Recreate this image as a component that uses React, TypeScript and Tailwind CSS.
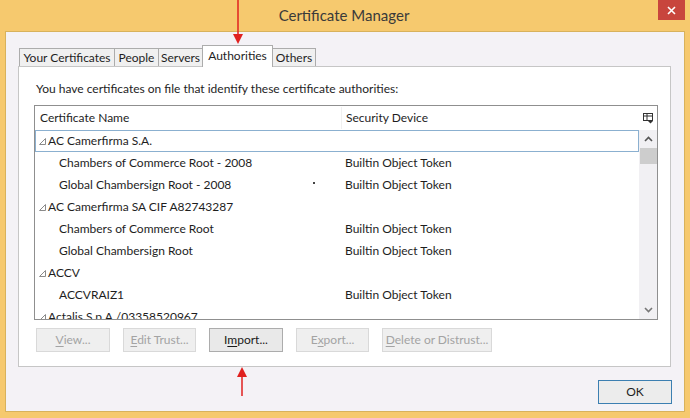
import React from "react";

const font = { fontFamily: 'Lato, "Noto Sans", sans-serif' };

function Tri() {
  return (
    <svg width="7" height="7" viewBox="0 0 7 7" className="mr-[2px] shrink-0">
      <path d="M6.5 0.5 L6.5 6.5 L0.5 6.5 Z" fill="none" stroke="#8a8a8a" strokeWidth="1" />
    </svg>
  );
}

type Row = { name: string; device?: string; group?: boolean; focus?: boolean };

const rows: Row[] = [
  { name: "AC Camerfirma S.A.", group: true, focus: true },
  { name: "Chambers of Commerce Root - 2008", device: "Builtin Object Token" },
  { name: "Global Chambersign Root - 2008", device: "Builtin Object Token" },
  { name: "AC Camerfirma SA CIF A82743287", group: true },
  { name: "Chambers of Commerce Root", device: "Builtin Object Token" },
  { name: "Global Chambersign Root", device: "Builtin Object Token" },
  { name: "ACCV", group: true },
  { name: "ACCVRAIZ1", device: "Builtin Object Token" },
  { name: "Actalis S.p.A./03358520967", group: true },
];

function Btn({ u, rest, pre = "", enabled = false, w }: { u: string; rest: string; pre?: string; enabled?: boolean; w: string }) {
  return (
    <div
      className={`${w} h-[24px] flex items-center justify-center text-[12px] whitespace-nowrap border ${
        enabled ? "border-[#acacac] bg-[#e9e9e9] text-[#1a1a1a]" : "border-[#d9d9d9] bg-[#efefef] text-[#a3a3a3]"
      }`}
    >
      <span>
        {pre}
        <span className="underline underline-offset-2">{u}</span>
        {rest}
      </span>
    </div>
  );
}

export default function App() {
  return (
    <div className="w-[690px] h-[418px] bg-[#f6c96e] flex flex-col relative overflow-hidden text-[#1e1e1e]" style={font}>
      {/* title bar */}
      <div className="h-[31px] flex items-start shrink-0">
        <div className="flex-1 h-[31px] flex items-center justify-center pl-[30px] text-[15px] text-[#3a3a3a]">
          Certificate Manager
        </div>
        <div className="w-[27px] h-[20px] mr-[5px] bg-[#c8453d] flex items-center justify-center">
          <svg width="9" height="9" viewBox="0 0 9 9">
            <path d="M1 1 L8 8 M8 1 L1 8" stroke="#fff" strokeWidth="1.6" />
          </svg>
        </div>
      </div>
      {/* client */}
      <div className="flex-1 mx-[5px] mb-[6px] border border-[#d8b25c] bg-[#f4f2f6] flex flex-col pl-[12px] pt-[13px]">
        {/* tabs */}
        <div className="flex items-end h-[21px] pl-[1px] text-[12px] whitespace-nowrap">
          <div className="w-[96px] h-[18px] border border-b-0 border-[#acacac] bg-[#f0f0f0] flex items-center justify-center">Your Certificates</div>
          <div className="w-[45px] h-[18px] -ml-px border border-b-0 border-[#acacac] bg-[#f0f0f0] flex items-center justify-center">People</div>
          <div className="w-[45px] h-[18px] -ml-px border border-b-0 border-[#acacac] bg-[#f0f0f0] flex items-center justify-center">Servers</div>
          <div className="w-[71px] h-[22px] -ml-px border border-b-0 border-[#acacac] bg-white flex items-center justify-center relative z-10 -mb-px pb-[2px]">Authorities</div>
          <div className="w-[44px] h-[18px] -ml-px border border-b-0 border-[#acacac] bg-[#f0f0f0] flex items-center justify-center">Others</div>
        </div>
        {/* panel */}
        <div className="w-[653px] h-[301px] border border-[#c6c6c6] bg-white px-[15px] flex flex-col">
          <div className="text-[12px] mt-[14px] h-[16px] leading-[16px] pl-[2px]">
            You have certificates on file that identify these certificate authorities:
          </div>
          {/* list */}
          <div className="mt-[8px] w-[624px] h-[215px] border border-[#8f8f8f] flex flex-col text-[12px] overflow-hidden">
            <div className="h-[24px] flex items-center shrink-0">
              <div className="w-[306px] pl-[5px]">Certificate Name</div>
              <div className="w-px h-[22px] bg-[#f0f0f0]" />
              <div className="flex-1 pl-[4px]">Security Device</div>
              <div className="w-[18px] flex items-center justify-center">
                <svg width="11" height="11" viewBox="0 0 11 11">
                  <rect x="0.5" y="0.5" width="9" height="7" fill="none" stroke="#333" />
                  <path d="M0.5 3 H9.5 M4 0.5 V7.5" stroke="#333" />
                  <path d="M5 8 H10 L7.5 10.5 Z" fill="#333" />
                </svg>
              </div>
            </div>
            <div className="flex flex-1 min-h-0">
              <div className="flex-1 flex flex-col overflow-hidden">
                {rows.map((r, i) => (
                  <div
                    key={i}
                    className={`h-[22px] shrink-0 flex items-center ${r.focus ? "border border-[#8bb0d0]" : "border border-transparent"}`}
                  >
                    <div className={`w-[306px] flex items-center relative ${r.group ? "pl-[3px]" : "pl-[23px]"}`}>
                      {r.group && <Tri />}
                      <span className="whitespace-nowrap">{r.name}</span>
                      {i === 2 && <div className="absolute left-[277px] top-[6px] w-[2px] h-[2px] bg-[#444]" />}
                    </div>
                    <div className="pl-[3px] whitespace-nowrap">{r.device ?? ""}</div>
                  </div>
                ))}
              </div>
              {/* scrollbar */}
              <div className="w-[18px] bg-[#f1f0f3] flex flex-col items-center">
                <div className="h-[18px] flex items-center justify-center">
                  <svg width="9" height="6" viewBox="0 0 9 6">
                    <path d="M1 5 L4.5 1.5 L8 5" fill="none" stroke="#555" strokeWidth="1.6" />
                  </svg>
                </div>
                <div className="w-[17px] h-[16px] bg-[#cdcdcd]" />
                <div className="flex-1" />
                <div className="h-[18px] flex items-center justify-center">
                  <svg width="9" height="6" viewBox="0 0 9 6">
                    <path d="M1 1 L4.5 4.5 L8 1" fill="none" stroke="#777" strokeWidth="1.6" />
                  </svg>
                </div>
              </div>
            </div>
          </div>
          {/* buttons */}
          <div className="flex mt-[8px] gap-[13px] pl-[2px]">
            <Btn w="w-[74px]" u="V" rest="iew..." />
            <Btn w="w-[73px]" u="E" rest="dit Trust..." />
            <Btn w="w-[74px]" enabled pre="I" u="m" rest="port..." />
            <Btn w="w-[73px]" pre="E" u="x" rest="port..." />
            <Btn w="w-[110px]" u="D" rest="elete or Distrust..." />
          </div>
        </div>
        {/* OK */}
        <div className="flex justify-end mt-[13px] pr-[12px]">
          <div className="w-[74px] h-[24px] border border-[#3c7fb1] bg-[#ececec] flex items-center justify-center text-[12px]">OK</div>
        </div>
      </div>
      {/* red arrows */}
      <svg className="absolute left-0 top-0 pointer-events-none" width="690" height="418">
        <line x1="238" y1="0" x2="238" y2="36" stroke="#e0211f" strokeWidth="1.5" />
        <path d="M233 34 L243 34 L238 44 Z" fill="#e0211f" />
        <line x1="242" y1="375" x2="242" y2="396" stroke="#e0211f" strokeWidth="1.5" />
        <path d="M237 377 L247 377 L242 367 Z" fill="#e0211f" />
      </svg>
    </div>
  );
}
